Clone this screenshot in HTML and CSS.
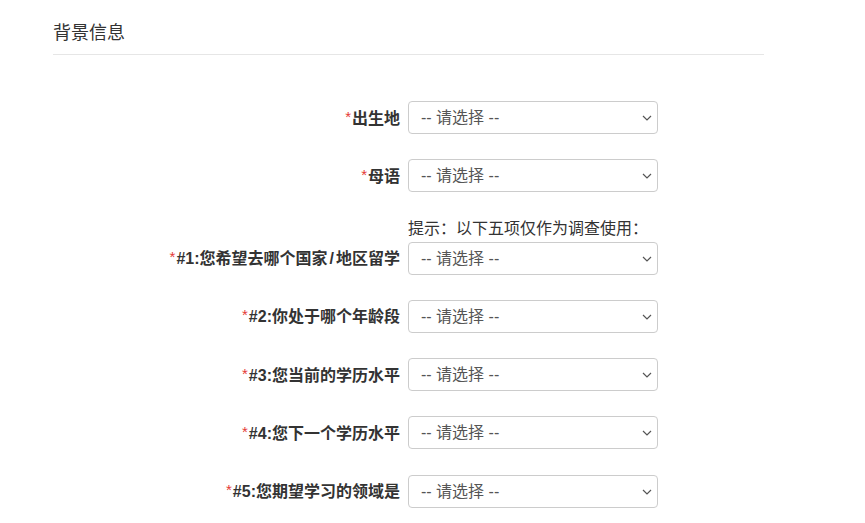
FILE: index.html
```html
<!DOCTYPE html>
<html lang="zh-CN">
<head>
<meta charset="utf-8">
<title>背景信息</title>
<link rel="stylesheet" href="styles.css">
</head>
<body>
<div class="page">
  <h2 class="section-title">背景信息</h2>
  <form class="form">
    <div class="row">
      <label class="label"><span class="req">*</span>出生地</label>
      <div class="control">
        <div class="select-wrap">
          <select class="select"><option>-- 请选择 --</option></select>
          <svg class="chev" width="10" height="6" viewBox="0 0 10 6"><path d="M1 1l4 4 4-4" fill="none" stroke="#555" stroke-width="1.2"/></svg>
        </div>
      </div>
    </div>
    <div class="row">
      <label class="label"><span class="req">*</span>母语</label>
      <div class="control">
        <div class="select-wrap">
          <select class="select"><option>-- 请选择 --</option></select>
          <svg class="chev" width="10" height="6" viewBox="0 0 10 6"><path d="M1 1l4 4 4-4" fill="none" stroke="#555" stroke-width="1.2"/></svg>
        </div>
      </div>
    </div>
    <div class="row row-hint">
      <div class="hint">提示：以下五项仅作为调查使用：</div>
      <label class="label"><span class="req">*</span>#1:您希望去哪个国家<span class="slash">/</span>地区留学</label>
      <div class="control">
        <div class="select-wrap">
          <select class="select"><option>-- 请选择 --</option></select>
          <svg class="chev" width="10" height="6" viewBox="0 0 10 6"><path d="M1 1l4 4 4-4" fill="none" stroke="#555" stroke-width="1.2"/></svg>
        </div>
      </div>
    </div>
    <div class="row">
      <label class="label"><span class="req">*</span>#2:你处于哪个年龄段</label>
      <div class="control">
        <div class="select-wrap">
          <select class="select"><option>-- 请选择 --</option></select>
          <svg class="chev" width="10" height="6" viewBox="0 0 10 6"><path d="M1 1l4 4 4-4" fill="none" stroke="#555" stroke-width="1.2"/></svg>
        </div>
      </div>
    </div>
    <div class="row">
      <label class="label"><span class="req">*</span>#3:您当前的学历水平</label>
      <div class="control">
        <div class="select-wrap">
          <select class="select"><option>-- 请选择 --</option></select>
          <svg class="chev" width="10" height="6" viewBox="0 0 10 6"><path d="M1 1l4 4 4-4" fill="none" stroke="#555" stroke-width="1.2"/></svg>
        </div>
      </div>
    </div>
    <div class="row">
      <label class="label"><span class="req">*</span>#4:您下一个学历水平</label>
      <div class="control">
        <div class="select-wrap">
          <select class="select"><option>-- 请选择 --</option></select>
          <svg class="chev" width="10" height="6" viewBox="0 0 10 6"><path d="M1 1l4 4 4-4" fill="none" stroke="#555" stroke-width="1.2"/></svg>
        </div>
      </div>
    </div>
    <div class="row">
      <label class="label"><span class="req">*</span>#5:您期望学习的领域是</label>
      <div class="control">
        <div class="select-wrap">
          <select class="select"><option>-- 请选择 --</option></select>
          <svg class="chev" width="10" height="6" viewBox="0 0 10 6"><path d="M1 1l4 4 4-4" fill="none" stroke="#555" stroke-width="1.2"/></svg>
        </div>
      </div>
    </div>
  </form>
</div>
</body>
</html>
```

FILE: styles.css
```css
* { box-sizing: border-box; }
html, body { margin: 0; padding: 0; background: #fff; }
body {
  font-family: "Liberation Sans", "Noto Sans CJK SC", sans-serif;
  color: #333;
}
.page {
  width: 711px;
  margin-left: 53px;
  padding-top: 18px;
}
.section-title {
  margin: 0;
  font-family: "Noto Sans CJK SC", sans-serif;
  font-size: 18px;
  line-height: 26px;
  font-weight: normal;
  color: #333;
  padding-bottom: 10px;
  border-bottom: 1px solid #e6e6e6;
}
.form {
  padding-top: 46px;
}
.row {
  display: grid;
  grid-template-columns: 347px 250px;
  column-gap: 8px;
  align-items: center;
  margin-bottom: 25.25px;
}
.row-hint {
  grid-template-rows: 24px 33px;
}
.hint {
  grid-column: 2;
  grid-row: 1;
  font-size: 16px;
  line-height: 22px;
  color: #333;
  white-space: nowrap;
  align-self: start;
}
.row-hint .label, .row-hint .control { grid-row: 2; }
.label {
  grid-column: 1;
  text-align: right;
  font-size: 16px;
  font-weight: bold;
  color: #333;
  white-space: nowrap;
  line-height: 20px;
}
.slash { margin: 0 2px; }
.req {
  color: #e53935;
  font-size: 15px;
  font-weight: normal;
  vertical-align: 2px;
  margin-right: 1px;
}
.control { grid-column: 2; }
.select-wrap { position: relative; width: 250px; height: 33px; }
.select {
  appearance: none;
  -webkit-appearance: none;
  width: 250px;
  height: 33px;
  border: 1px solid #ccc;
  border-radius: 4px;
  background: #fff;
  padding: 0 28px 0 12px;
  font-family: "Liberation Sans", "Noto Sans CJK SC", sans-serif;
  font-size: 16px;
  color: #555;
}
.chev {
  position: absolute;
  right: 6px;
  top: 14px;
  pointer-events: none;
}
```
